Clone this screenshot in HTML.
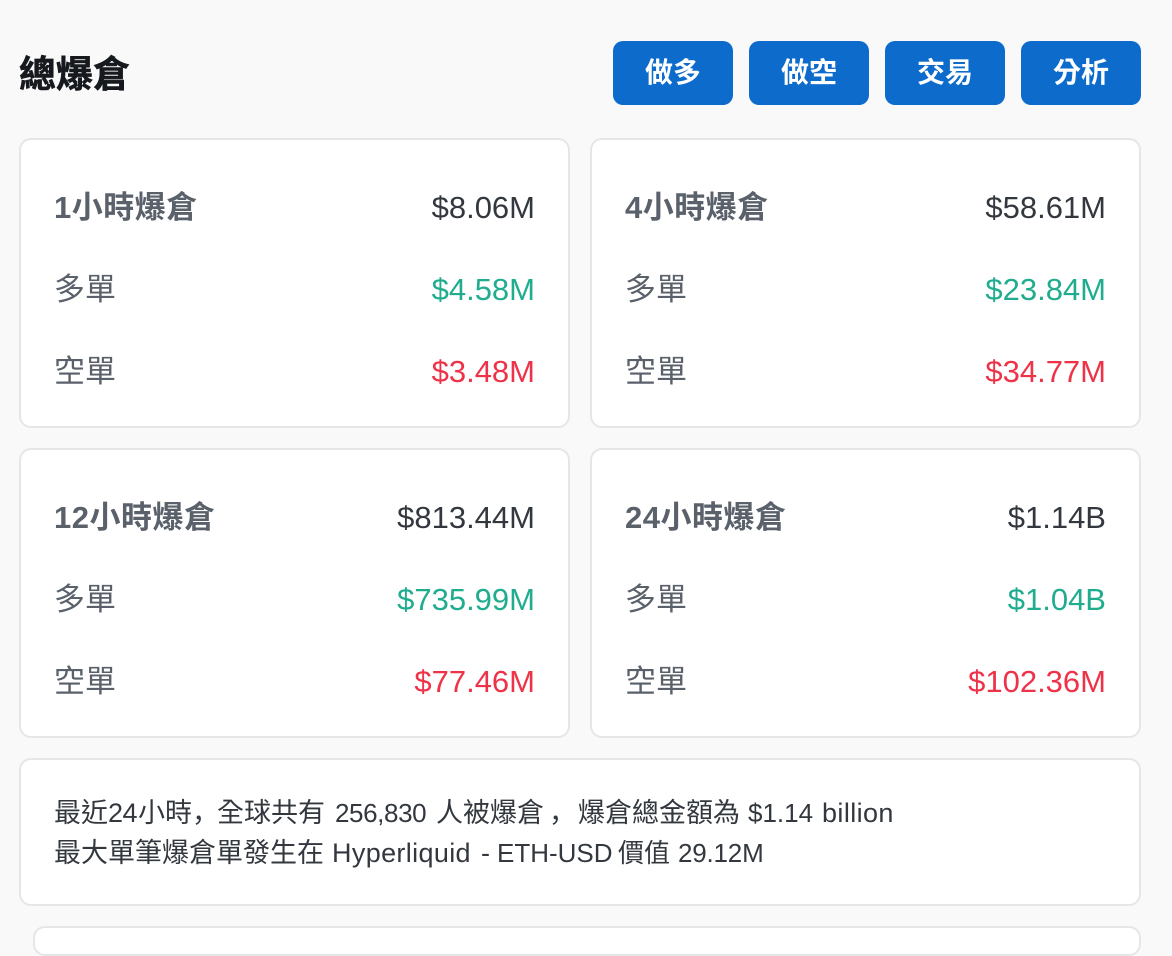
<!DOCTYPE html>
<html lang="zh-Hant">
<head>
<meta charset="utf-8">
<style>
html,body{margin:0;padding:0}
body{width:1172px;height:932px;overflow:hidden;position:relative;background:#f9f9f9;font-family:"Liberation Sans","Noto Sans CJK TC",sans-serif;color:#33383f}
h1{position:absolute;left:19px;top:53px;margin:0;font-size:37px;line-height:44px;font-weight:700;color:#16191d;-webkit-text-stroke:.6px #16191d}
.btn{position:absolute;top:41px;width:120px;height:64px;border-radius:10px;background:#0d6bcb;color:#fff;font-size:28px;font-weight:700;line-height:63px;text-align:center}
.card{position:absolute;box-sizing:border-box;width:551px;height:290px;background:#fff;border:2px solid #e5e6e8;border-radius:12px}
.l,.v{position:absolute;white-space:nowrap;font-size:31px;line-height:40px}
.l{left:33px;color:#5a616b}
.l.h{font-weight:700;letter-spacing:.5px}
.v{right:33px;color:#33383f}
.g{color:#20ac8e}
.r{color:#ee3248}
.r1{top:48px}.r2{top:130px}.r3{top:212px}
.info{position:absolute;left:19px;top:758px;box-sizing:border-box;width:1122px;height:148px;background:#fff;border:2px solid #e5e6e8;border-radius:12px}
.info span{position:absolute;white-space:nowrap;font-size:27px;line-height:40px;color:#33383f}
.sc{font-family:"Liberation Sans","Noto Sans CJK SC",sans-serif}
.a{top:33px}.b{top:73px}
.next{position:absolute;left:33px;top:926px;width:1108px;height:30px;box-sizing:border-box;background:#fff;border:2px solid #e5e6e8;border-radius:12px}
</style>
</head>
<body>
<h1>總爆倉</h1>
<div class="btn" style="left:613px">做多</div>
<div class="btn" style="left:749px">做空</div>
<div class="btn" style="left:885px">交易</div>
<div class="btn" style="left:1021px">分析</div>

<div class="card" style="left:19px;top:138px">
<div class="l h r1">1小時爆倉</div><div class="v r1">$8.06M</div>
<div class="l r2">多單</div><div class="v g r2">$4.58M</div>
<div class="l r3">空單</div><div class="v r r3">$3.48M</div>
</div>
<div class="card" style="left:590px;top:138px">
<div class="l h r1">4小時爆倉</div><div class="v r1">$58.61M</div>
<div class="l r2">多單</div><div class="v g r2">$23.84M</div>
<div class="l r3">空單</div><div class="v r r3">$34.77M</div>
</div>
<div class="card" style="left:19px;top:448px">
<div class="l h r1">12小時爆倉</div><div class="v r1">$813.44M</div>
<div class="l r2">多單</div><div class="v g r2">$735.99M</div>
<div class="l r3">空單</div><div class="v r r3">$77.46M</div>
</div>
<div class="card" style="left:590px;top:448px">
<div class="l h r1">24小時爆倉</div><div class="v r1">$1.14B</div>
<div class="l r2">多單</div><div class="v g r2">$1.04B</div>
<div class="l r3">空單</div><div class="v r r3">$102.36M</div>
</div>

<div class="info">
<span class="a" style="left:33px">最近</span>
<span class="a" style="left:87px;letter-spacing:-.5px">24</span>
<span class="a" style="left:117px">小時</span>
<span class="a sc" style="left:171px">，</span>
<span class="a" style="left:196px">全球共有</span>
<span class="a" style="left:314px;font-size:26px;letter-spacing:-.4px">256,830</span>
<span class="a" style="left:415px">人被爆倉</span>
<span class="a sc" style="left:528px">，</span>
<span class="a" style="left:557px">爆倉總金額為</span>
<span class="a" style="left:727px;font-size:26px">$1.14</span>
<span class="a" style="left:801px;letter-spacing:.4px">billion</span>

<span class="b" style="left:33px">最大單筆爆倉單發生在</span>
<span class="b" style="left:311px;letter-spacing:.35px">Hyperliquid</span>
<span class="b" style="left:460px">-</span>
<span class="b" style="left:476px;font-size:26px">ETH-USD</span>
<span class="b" style="left:597px;font-size:26px">價值</span>
<span class="b" style="left:657px;font-size:26px;letter-spacing:-.2px">29.12M</span>
</div>
<div class="next"></div>
</body>
</html>
